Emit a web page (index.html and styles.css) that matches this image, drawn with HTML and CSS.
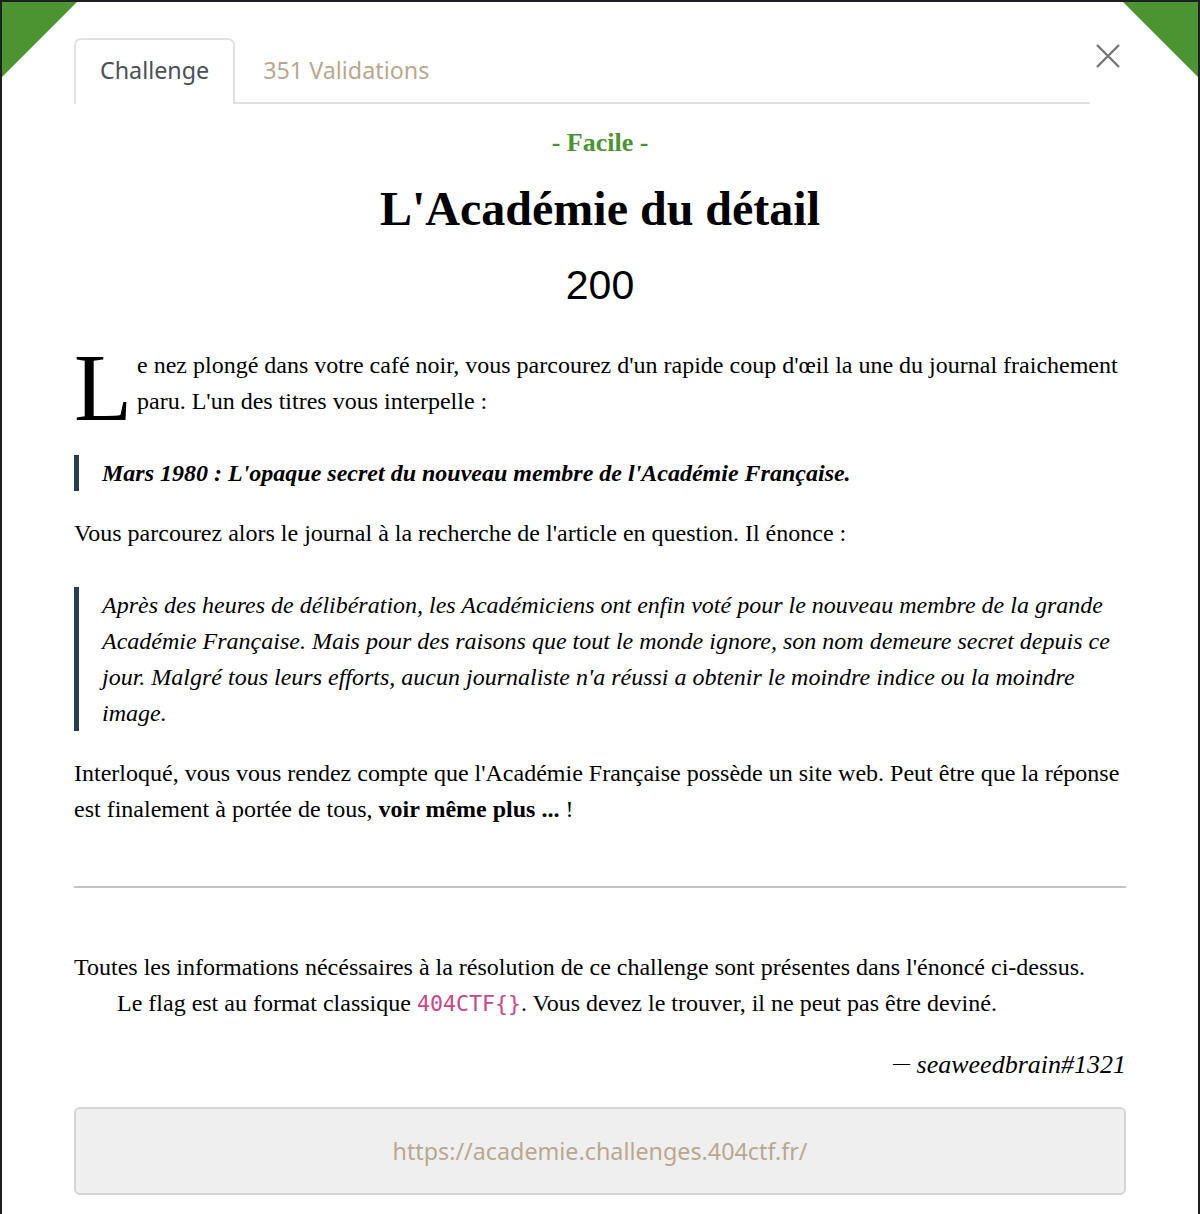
FILE: index.html
```html
<!DOCTYPE html>
<html lang="fr">
<head>
<meta charset="utf-8">
<title>L'Académie du détail</title>
<link rel="stylesheet" href="styles.css">
</head>
<body>
<div class="backdrop">
  <div class="modal">
    <div class="corner corner-left"></div>
    <div class="corner corner-right"></div>
    <div class="header">
      <ul class="tabs">
        <li class="tab active">Challenge</li>
        <li class="tab">351 Validations</li>
      </ul>
      <button class="close" aria-label="Fermer">
        <svg width="24" height="24" viewBox="0 0 24 24"><path d="M1 1L23 23M23 1L1 23" stroke="#777" stroke-width="2.4" fill="none"/></svg>
      </button>
    </div>
    <div class="content">
      <div class="level">- Facile -</div>
      <h1 class="title">L'Académie du détail</h1>
      <div class="points">200</div>
      <p class="lead"><span class="dropcap">L</span>e nez plongé dans votre café noir, vous parcourez d'un rapide coup d'œil la une du journal fraichement paru. L'un des titres vous interpelle :</p>
      <blockquote class="quote headline">Mars 1980 : L'opaque secret du nouveau membre de l'Académie Française.</blockquote>
      <p>Vous parcourez alors le journal à la recherche de l'article en question. Il énonce :</p>
      <blockquote class="quote article">Après des heures de délibération, les Académiciens ont enfin voté pour le nouveau membre de la grande Académie Française. Mais pour des raisons que tout le monde ignore, son nom demeure secret depuis ce jour. Malgré tous leurs efforts, aucun journaliste n'a réussi a obtenir le moindre indice ou la moindre image.</blockquote>
      <p>Interloqué, vous vous rendez compte que l'Académie Française possède un site web. Peut être que la réponse est finalement à portée de tous, <strong>voir même plus ...</strong>&nbsp;!</p>
      <hr class="sep">
      <p class="info">Toutes les informations nécéssaires à la résolution de ce challenge sont présentes dans l'énoncé ci-dessus.<br><span class="indent"></span>Le flag est au format classique <code>404CTF{}</code>. Vous devez le trouver, il ne peut pas être deviné.</p>
      <p class="author"><span class="dash">—</span> <em>seaweedbrain#1321</em></p>
      <div class="url">https://academie.challenges.404ctf.fr/</div>
    </div>
  </div>
</div>
</body>
</html>
```
FILE: styles.css
```css
html, body {
  margin: 0;
  padding: 0;
  background: #1b1f24;
}
.backdrop {
  padding: 2px 2px 0 2px;
  min-height: 1214px;
  box-sizing: border-box;
}
.modal {
  position: relative;
  background: #ffffff;
  min-height: 1212px;
  padding: 36px 72px 40px 72px;
  box-sizing: border-box;
  overflow: hidden;
}
.corner {
  position: absolute;
  top: 0;
  width: 0;
  height: 0;
}
.corner-left {
  left: 0;
  border-top: 75px solid #4c9331;
  border-right: 75px solid transparent;
}
.corner-right {
  right: 0;
  border-top: 75px solid #4c9331;
  border-left: 75px solid transparent;
}
.header {
  display: flex;
  align-items: flex-start;
}
.tabs {
  display: flex;
  list-style: none;
  margin: 0;
  padding: 0;
  flex: 1;
  border-bottom: 2px solid #dee2e6;
}
.tab {
  font-family: "Noto Sans", "Open Sans", sans-serif;
  font-size: 23.3px;
  color: #b9a88f;
  padding: 0 26px;
  height: 62px;
  line-height: 60px;
  border: 2px solid transparent;
  border-bottom: none;
  border-radius: 7px 7px 0 0;
  margin-bottom: -2px;
}
.tab.active {
  color: #495057;
  border-color: #dee2e6;
  background: #fff;
  height: 64px;
  padding: 0 24px;
}
.close {
  background: none;
  border: none;
  padding: 0;
  margin: 6px 6px 0 6px;
  width: 24px;
  height: 24px;
  cursor: pointer;
  line-height: 0;
}
.content {
  font-family: "Liberation Serif", "Times New Roman", serif;
  font-size: 24px;
  line-height: 36px;
  color: #000;
}
.level {
  text-align: center;
  color: #4c9331;
  font-weight: bold;
  font-size: 26px;
  line-height: 36px;
  margin-top: 21px;
}
.title {
  text-align: center;
  font-size: 48px;
  line-height: 56px;
  margin: 20px 0 0 0;
}
.points {
  text-align: center;
  font-family: "Liberation Sans", Arial, sans-serif;
  font-size: 41px;
  line-height: 48px;
  margin-top: 24px;
}
p {
  margin: 0 0 24px 0;
}
.lead {
  margin-top: 38px;
}
.dropcap {
  float: left;
  font-size: 95px;
  line-height: 68px;
  margin-top: 7px;
  padding-right: 5px;
}
.quote {
  margin: 36px 0 24px 0;
  border-left: 5px solid #243f55;
  padding: 0 0 0 23px;
  font-style: italic;
}
.headline {
  font-weight: bold;
}
.sep {
  border: none;
  border-top: 2px solid #c4c4c4;
  margin: 59px 0 61px 0;
}
.indent {
  display: inline-block;
  width: 43px;
}
code {
  font-family: "DejaVu Sans Mono", monospace;
  color: #cc4488;
  font-size: 21.6px;
}
.author {
  text-align: right;
  font-size: 26px;
  line-height: 36px;
  margin: 25px 0 24px 0;
}
.dash {
  font-size: 17px;
  vertical-align: 5px;
  line-height: 1;
}
.url {
  font-family: "Noto Sans", "Open Sans", sans-serif;
  font-size: 23.3px;
  color: #b9a88f;
  text-align: center;
  background: #efefef;
  border: 2px solid #d3d6d9;
  border-radius: 6px;
  height: 84px;
  line-height: 84px;
}
```
